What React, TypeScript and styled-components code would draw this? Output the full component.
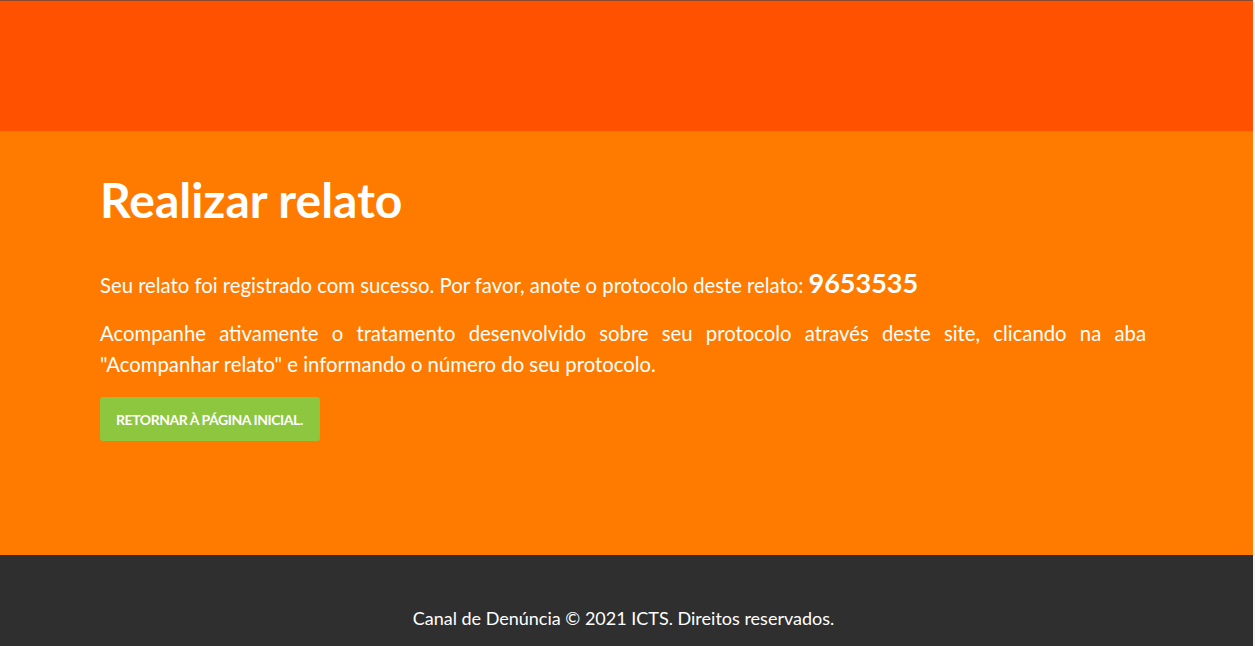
import React from "react";
import styled, { createGlobalStyle } from "styled-components";

const Global = createGlobalStyle`
  html, body { margin: 0; padding: 0; background: #f4f4f4; }
  body { font-family: Lato, "Open Sans", sans-serif; }
`;

const Page = styled.div`
  width: 1253px;
  min-height: 646px;
  display: flex;
  flex-direction: column;
`;

const Header = styled.header`
  height: 130px;
  background: #ff5100;
  border-top: 1px solid #8c4b2e;
`;

const Main = styled.main`
  background: #ff7b00;
  height: 424px;
  padding: 0 107px 0 100px;
  box-sizing: border-box;
  color: #fff;
`;

const Title = styled.h1`
  margin: 0;
  padding-top: 36px;
  font-size: 48px;
  font-weight: 700;
  line-height: 66px;
`;

const Text = styled.p`
  margin: 0;
  font-size: 20.3px;
  line-height: 31px;
  text-align: justify;
`;

const FirstText = styled(Text)`
  margin-top: 34px;
  margin-bottom: 17px;
`;

const Protocol = styled.strong`
  font-size: 27px;
  font-weight: 700;
`;

const Button = styled.a`
  display: inline-flex;
  align-items: center;
  margin-top: 17px;
  height: 44px;
  padding: 0 17px 0 16px;
  background: #8dc63f;
  border-radius: 3px;
  color: #fff;
  font-size: 14px;
  font-weight: 700;
  letter-spacing: -0.45px;
  text-transform: uppercase;
  text-decoration: none;
`;

const Footer = styled.footer`
  flex: 1;
  background: #2f2f2f;
  color: #fff;
  text-align: center;
  font-size: 18px;
  padding: 52px 6px 0 0;
  box-sizing: border-box;
`;

export default function App() {
  return (
    <>
      <Global />
      <Page>
        <Header />
        <Main>
          <Title>Realizar relato</Title>
          <FirstText>
            Seu relato foi registrado com sucesso. Por favor, anote o protocolo deste relato:{" "}
            <Protocol>9653535</Protocol>
          </FirstText>
          <Text>
            Acompanhe ativamente o tratamento desenvolvido sobre seu protocolo através deste site, clicando na aba
            "Acompanhar relato" e informando o número do seu protocolo.
          </Text>
          <Button href="#">Retornar à página inicial.</Button>
        </Main>
        <Footer>Canal de Denúncia © 2021 ICTS. Direitos reservados.</Footer>
      </Page>
    </>
  );
}
